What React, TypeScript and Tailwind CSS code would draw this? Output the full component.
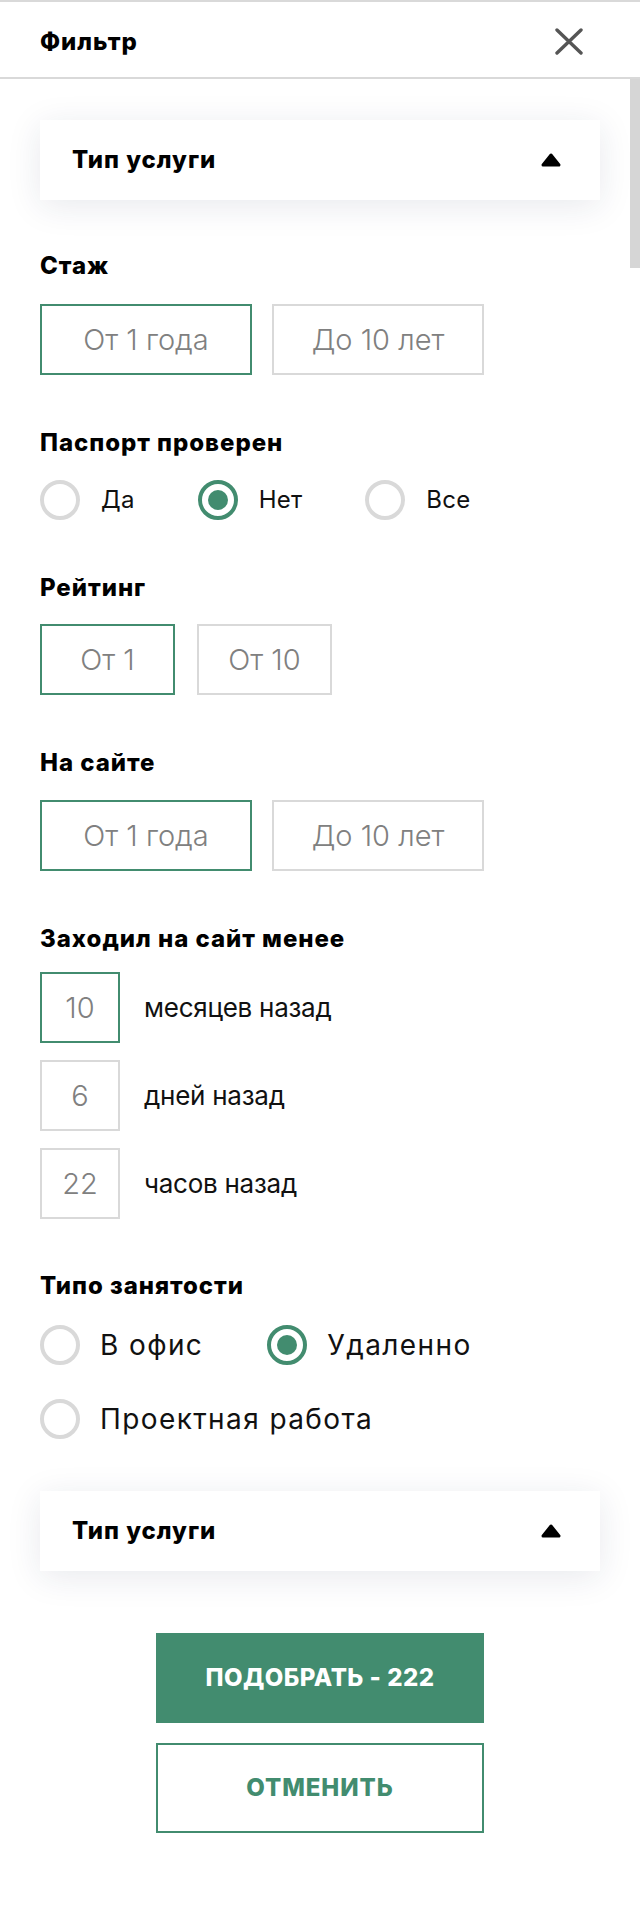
import React from "react";

function Radio({ checked, label, big }: { checked?: boolean; label: string; big?: boolean }) {
  return (
    <div className="flex items-center">
      {checked ? (
        <span className="w-10 h-10 rounded-full border-[4px] border-[#428c6f] flex items-center justify-center shrink-0">
          <span className="w-[20px] h-[20px] rounded-full bg-[#428c6f]" />
        </span>
      ) : (
        <span className="w-10 h-10 rounded-full border-[4px] border-[#d9d9d9] shrink-0" />
      )}
      <span
        className={
          big
            ? "ml-[20px] text-[28px] leading-[32px] tracking-[0.05em] text-[#111]"
            : "ml-[21px] text-[24px] leading-[28px] tracking-[0.01em] text-[#111]"
        }
      >
        {label}
      </span>
    </div>
  );
}

function Label({ children }: { children: React.ReactNode }) {
  return (
    <div className="text-[24px] leading-[28px] font-extrabold tracking-[0.04em] text-black">{children}</div>
  );
}

function Box({ text, active, w }: { text: string; active?: boolean; w: string }) {
  return (
    <div
      className={
        (active ? "border-[#428c6f] " : "border-[#d9d9d9] ") +
        w +
        " h-[71px] border-2 flex items-center justify-center text-[29px] font-light text-[#808080] tracking-[0em]"
      }
    >
      {text}
    </div>
  );
}

function Triangle() {
  return (
    <svg width="22" height="16" viewBox="0 0 22 16">
      <path d="M11 3 L19 13 L3 13 Z" fill="#000" stroke="#000" strokeWidth="3" strokeLinejoin="round" />
    </svg>
  );
}

function Card() {
  return (
    <div className="h-[80px] bg-white shadow-[0_6px_34px_rgba(30,40,80,0.10)] flex items-center justify-between pl-[32px] pr-[38px]">
      <span className="text-[24px] leading-[28px] font-extrabold tracking-[0.04em] text-black">Тип услуги</span>
      <Triangle />
    </div>
  );
}

export default function App() {
  return (
    <div className="relative w-[640px] min-h-[1916px] bg-white font-['Inter','Noto_Sans',sans-serif] text-black">
      <div className="h-[2px] bg-[#d9d9d9]" />
      <div className="h-[75px] flex items-center justify-between pl-[40px] pr-[57px] border-b-2 border-[#d9d9d9] box-content">
        <span className="text-[24px] leading-[28px] font-extrabold tracking-[0.04em] mt-[4px]">Фильтр</span>
        <svg width="28" height="27" viewBox="0 0 28 27" className="mt-[4px]">
          <path d="M2 2 L26 25 M26 2 L2 25" stroke="#555" strokeWidth="3.4" strokeLinecap="round" />
        </svg>
      </div>

      <div className="absolute right-0 top-[79px] w-[10px] h-[189px] bg-[#d6d6d6]" />

      <div className="px-[40px] pt-[41px]">
        <Card />

        <div className="mt-[52px]">
          <Label>Стаж</Label>
          <div className="mt-[24px] flex gap-[20px]">
            <Box text="От 1 года" active w="w-[212px]" />
            <Box text="До 10 лет" w="w-[212px]" />
          </div>
        </div>

        <div className="mt-[54px]">
          <Label>Паспорт проверен</Label>
          <div className="mt-[23px] flex items-center gap-[63px]">
            <Radio label="Да" />
            <Radio label="Нет" checked />
            <Radio label="Все" />
          </div>
        </div>

        <div className="mt-[54px]">
          <Label>Рейтинг</Label>
          <div className="mt-[22px] flex gap-[22px]">
            <Box text="От 1" active w="w-[135px]" />
            <Box text="От 10" w="w-[135px]" />
          </div>
        </div>

        <div className="mt-[54px]">
          <Label>На сайте</Label>
          <div className="mt-[23px] flex gap-[20px]">
            <Box text="От 1 года" active w="w-[212px]" />
            <Box text="До 10 лет" w="w-[212px]" />
          </div>
        </div>

        <div className="mt-[54px]">
          <Label>Заходил на сайт менее</Label>
          <div className="mt-[19px] flex flex-col gap-[17px]">
            {[
              ["10", "месяцев назад", true],
              ["6", "дней назад", false],
              ["22", "часов назад", false],
            ].map(([n, t, a]) => (
              <div key={t as string} className="flex items-center">
                <Box text={n as string} active={a as boolean} w="w-[80px]" />
                <span className="ml-[24px] text-[26px] leading-[30px] tracking-[-0.01em] text-[#111]">{t as string}</span>
              </div>
            ))}
          </div>
        </div>

        <div className="mt-[53px]">
          <Label>Типо занятости</Label>
          <div className="mt-[25px] flex items-center gap-[64px]">
            <Radio label="В офис" big />
            <Radio label="Удаленно" checked big />
          </div>
          <div className="mt-[34px]">
            <Radio label="Проектная работа" big />
          </div>
        </div>

        <div className="mt-[52px]">
          <Card />
        </div>

        <div className="mt-[62px] flex flex-col items-center gap-[20px]">
          <button className="w-[328px] h-[90px] bg-[#428c6f] text-white text-[24px] font-extrabold tracking-[0.02em] uppercase">
            ПОДОБРАТЬ - 222
          </button>
          <button className="w-[328px] h-[90px] border-2 border-[#428c6f] text-[#428c6f] text-[24px] font-extrabold tracking-[0.04em] bg-white">
            ОТМЕНИТЬ
          </button>
        </div>
      </div>
    </div>
  );
}
